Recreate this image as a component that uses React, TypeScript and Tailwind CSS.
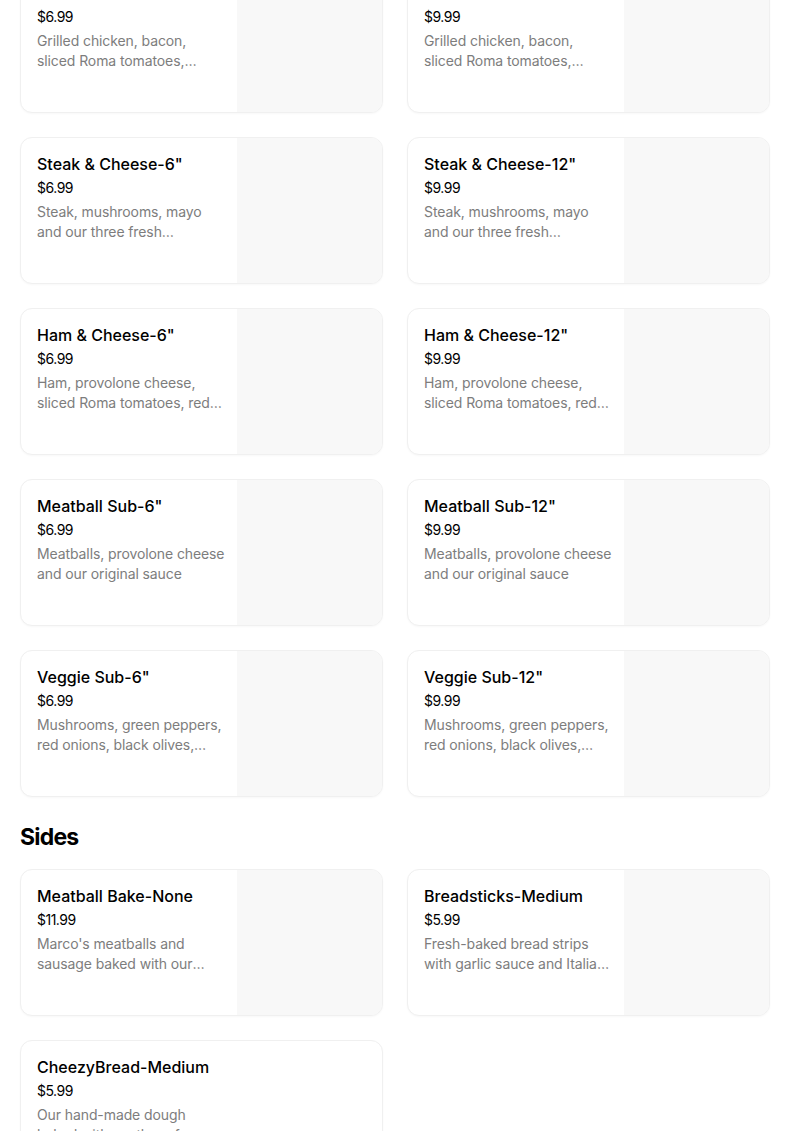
import React from 'react';

type Item = {
    title: string;
    price: string;
    desc: string;
    image?: boolean;
};

const subs: Item[] = [
    { title: 'Chicken & Bacon Ranch-6"', price: '$6.99', desc: 'Grilled chicken, bacon, sliced\u00a0Roma tomatoes, American cheese and ranch dressing', image: true },
    { title: 'Chicken & Bacon Ranch-12"', price: '$9.99', desc: 'Grilled chicken, bacon, sliced\u00a0Roma tomatoes, American cheese and ranch dressing', image: true },
    { title: 'Steak & Cheese-6"', price: '$6.99', desc: 'Steak, mushrooms, mayo and our three fresh\u2026', image: true },
    { title: 'Steak & Cheese-12"', price: '$9.99', desc: 'Steak, mushrooms, mayo and our three fresh\u2026', image: true },
    { title: 'Ham & Cheese-6"', price: '$6.99', desc: 'Ham, provolone cheese, sliced Roma tomatoes, red onions and mayo', image: true },
    { title: 'Ham & Cheese-12"', price: '$9.99', desc: 'Ham, provolone cheese, sliced Roma tomatoes, red onions and mayo', image: true },
    { title: 'Meatball Sub-6"', price: '$6.99', desc: 'Meatballs, provolone cheese and our original sauce', image: true },
    { title: 'Meatball Sub-12"', price: '$9.99', desc: 'Meatballs, provolone cheese and our original sauce', image: true },
    { title: 'Veggie Sub-6"', price: '$6.99', desc: 'Mushrooms, green peppers, red onions, black olives, tomatoes and cheese', image: true },
    { title: 'Veggie Sub-12"', price: '$9.99', desc: 'Mushrooms, green peppers, red onions, black olives, tomatoes and cheese', image: true },
];

const sides: Item[] = [
    { title: 'Meatball Bake-None', price: '$11.99', desc: "Marco's meatballs and sausage baked with our original sauce and cheese", image: true },
    { title: 'Breadsticks-Medium', price: '$5.99', desc: 'Fresh-baked bread strips with garlic sauce and Italian seasoning', image: true },
    { title: 'CheezyBread-Medium', price: '$5.99', desc: 'Our hand-made dough baked with another of our fresh cheeses', image: false },
];

function ItemCard({ item }: { item: Item }) {
    return (
        <div className="flex h-[147px] rounded-xl border border-[#f0f0f0] bg-white overflow-hidden shadow-[0_1px_2px_rgba(0,0,0,0.03)]">
            <div className="w-[216px] flex-none pt-4 pl-4 pr-2">
                <div className="text-[16px] leading-5 font-medium text-black whitespace-nowrap">{item.title}</div>
                <div className="mt-1 text-[14px] leading-5 text-black tracking-[-0.5px]">{item.price}</div>
                <div className="mt-1 text-[14px] leading-5 text-[#7d7d7d] line-clamp-2 tracking-[-0.1px]">{item.desc}</div>
            </div>
            {item.image && <div className="flex-1 bg-[#f8f8f8]" />}
        </div>
    );
}

export default function App() {
    return (
        <div className="bg-white min-h-screen overflow-hidden" style={{ fontFamily: 'Inter, "Noto Sans", sans-serif' }}>
            <div className="-mt-[34px] pl-5 w-[770px]">
                {/* SUBS */}
                <div className="grid grid-cols-2 gap-6">
                    {subs.map((it) => (
                        <ItemCard key={it.title} item={it} />
                    ))}
                </div>

                {/* SIDES */}
                <h2 className="mt-6 mb-4 text-[23px] leading-8 font-bold text-black tracking-[-0.8px]">Sides</h2>
                <div className="grid grid-cols-2 gap-6 pb-10">
                    {sides.map((it) => (
                        <ItemCard key={it.title} item={it} />
                    ))}
                </div>
            </div>
        </div>
    );
}
